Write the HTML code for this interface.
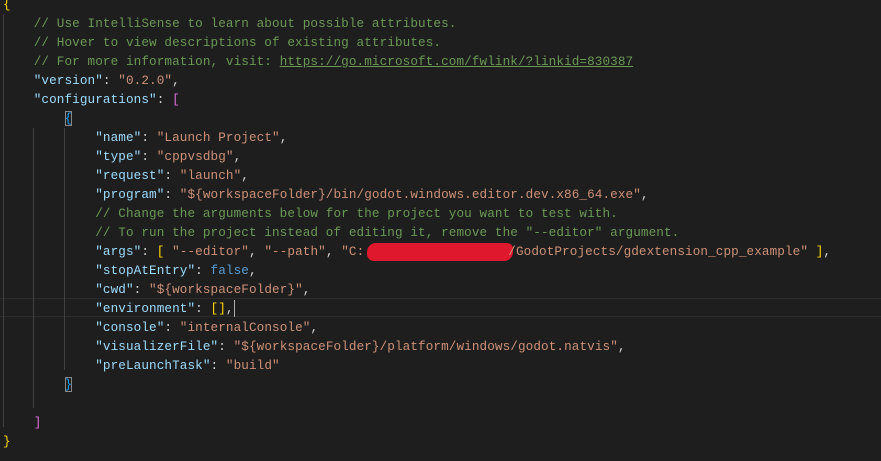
<!DOCTYPE html>
<html><head><meta charset="utf-8"><style>
html,body{margin:0;padding:0;background:#1e1e1e;width:881px;height:461px;overflow:hidden;position:relative}
.l{position:absolute;left:3px;height:19px;line-height:19px;font-family:"Liberation Mono",monospace;font-size:12.65px;letter-spacing:0.1px;white-space:pre;color:#d4d4d4}
.c{color:#6a9955}.k{color:#9cdcfe}.s{color:#ce9178}.b{color:#569cd6}
.y{color:#ffd700}.p{color:#da70d6}.bl{color:#179fff}
.g{position:absolute;width:1px;background:#404040}
.u{text-decoration:underline}
</style></head><body>
<div style="position:absolute;left:0;top:298px;width:881px;height:17px;border-top:1px solid #2c2c2c;border-bottom:1px solid #2c2c2c"></div>
<div class="g" style="left:3px;top:14px;height:413px"></div>
<div class="g" style="left:33px;top:128px;height:280px"></div>
<div class="g" style="left:64px;top:128px;height:242px"></div>
<div style="position:absolute;left:367px;top:243px;width:146px;height:18px;background:#e0182d;border-radius:9px 6px 9px 7px"></div>
<div class="l" style="top:-5px"><span class="y">{</span></div>
<div class="l c" style="top:14px">    // Use IntelliSense to learn about possible attributes.</div>
<div class="l c" style="top:33px">    // Hover to view descriptions of existing attributes.</div>
<div class="l c" style="top:52px">    // For more information, visit: <span class="u">https://go.microsoft.com/fwlink/?linkid=830387</span></div>
<div class="l" style="top:71px">    <span class="k">"version"</span>: <span class="s">"0.2.0"</span>,</div>
<div class="l" style="top:90px">    <span class="k">"configurations"</span>: <span class="p">[</span></div>
<div class="l" style="top:109px">        <span class="bl" style="outline:1px solid #888;outline-offset:-1px">{</span></div>
<div class="l" style="top:128px">            <span class="k">"name"</span>: <span class="s">"Launch Project"</span>,</div>
<div class="l" style="top:147px">            <span class="k">"type"</span>: <span class="s">"cppvsdbg"</span>,</div>
<div class="l" style="top:166px">            <span class="k">"request"</span>: <span class="s">"launch"</span>,</div>
<div class="l" style="top:185px">            <span class="k">"program"</span>: <span class="s">"${workspaceFolder}/bin/godot.windows.editor.dev.x86_64.exe"</span>,</div>
<div class="l c" style="top:204px">            // Change the arguments below for the project you want to test with.</div>
<div class="l c" style="top:223px">            // To run the project instead of editing it, remove the "--editor" argument.</div>
<div class="l" style="top:242px">            <span class="k">"args"</span>: <span class="y">[</span> <span class="s">"--editor"</span>, <span class="s">"--path"</span>, <span class="s">"C:<span style="display:inline-block;width:144px"></span>/GodotProjects/gdextension_cpp_example"</span> <span class="y">]</span>,</div>
<div class="l" style="top:261px">            <span class="k">"stopAtEntry"</span>: <span class="b">false</span>,</div>
<div class="l" style="top:280px">            <span class="k">"cwd"</span>: <span class="s">"${workspaceFolder}"</span>,</div>
<div class="l" style="top:299px">            <span class="k">"environment"</span>: <span class="y">[]</span>,<span style="display:inline-block;width:1px;height:17px;background:#aeafad;vertical-align:middle"></span></div>
<div class="l" style="top:318px">            <span class="k">"console"</span>: <span class="s">"internalConsole"</span>,</div>
<div class="l" style="top:337px">            <span class="k">"visualizerFile"</span>: <span class="s">"${workspaceFolder}/platform/windows/godot.natvis"</span>,</div>
<div class="l" style="top:356px">            <span class="k">"preLaunchTask"</span>: <span class="s">"build"</span></div>
<div class="l" style="top:375px">        <span class="bl" style="outline:1px solid #888;outline-offset:-1px">}</span></div>
<div class="l" style="top:413px">    <span class="p">]</span></div>
<div class="l" style="top:432px"><span class="y">}</span></div>
</body></html>
